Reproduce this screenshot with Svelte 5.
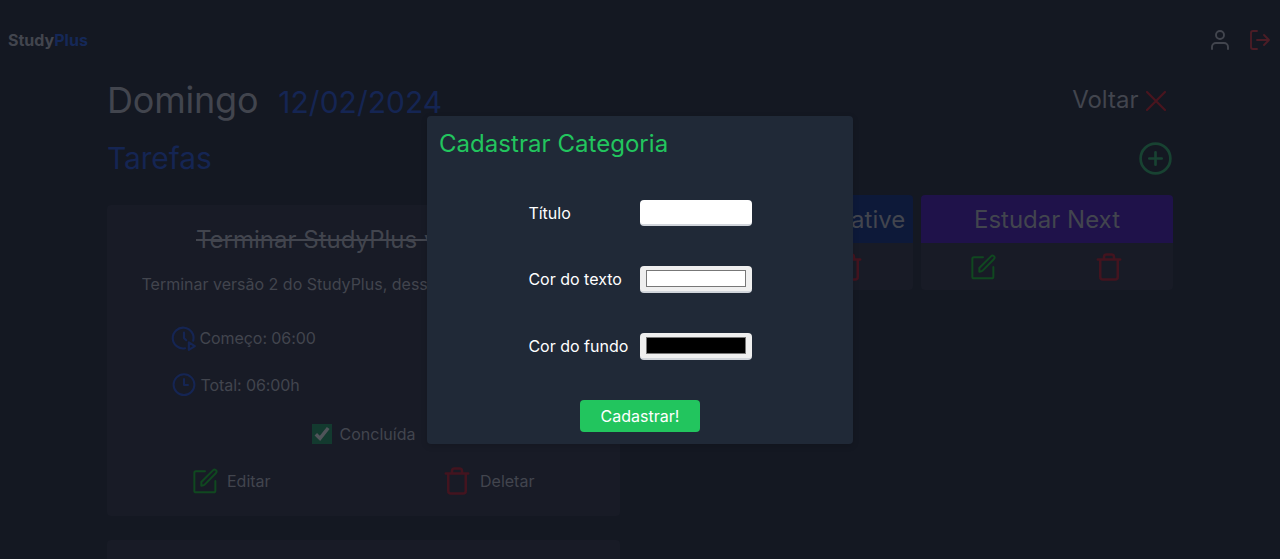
<script>
  const categories = [
    { name: 'Estudar React Native', tone: 'navy' },
    { name: 'Estudar Next', tone: 'purple' }
  ];
  let title = $state('');
  let textColor = $state('#ffffff');
  let backColor = $state('#000000');
</script>

{#snippet edit()}
  <svg class="edit" width="25" height="26" viewBox="0 0 75 78">
    <path d="M36 10H9q-5 0-5 5v53q0 5 5 5h53q5 0 5-5V39" />
    <path d="M25 53V42L60 7q4-4 8-1 5 4 1 9L35 50q-3 3-10 3z" />
  </svg>
{/snippet}

{#snippet trash()}
  <svg class="trash" width="30" height="30" viewBox="0 0 24 24">
    <path d="M3 6h18M19 6v14a2 2 0 0 1-2 2H7a2 2 0 0 1-2-2V6m3 0V4a2 2 0 0 1 2-2h4a2 2 0 0 1 2 2v2" />
  </svg>
{/snippet}

<div class="page">
  <header>
    <div class="logo">Study<span>Plus</span></div>
    <nav>
      <svg class="user" width="24" height="24" viewBox="0 0 24 24"><path d="M20 21v-2a4 4 0 0 0-4-4H8a4 4 0 0 0-4 4v2" /><circle cx="12" cy="7" r="4" /></svg>
      <svg class="exit" width="24" height="24" viewBox="0 0 24 24"><path d="M9 21H5a2 2 0 0 1-2-2V5a2 2 0 0 1 2-2h4M16 17l5-5-5-5M21 12H9" /></svg>
    </nav>
  </header>

  <main>
    <div class="day">
      <h1>Domingo</h1>
      <span class="date">12/02/2024</span>
      <div class="back">
        Voltar
        <svg width="22" height="22" viewBox="0 0 22 22"><path d="M2 2l18 18M20 2L2 20" /></svg>
      </div>
    </div>

    <div class="section">
      <h2>Tarefas</h2>
      <svg width="34" height="34" viewBox="0 0 34 34"><circle cx="16.5" cy="17.5" r="14.9" /><path d="M16.5 11.3v12.4M10.3 17.5h12.4" /></svg>
    </div>

    <div class="content">
      <div class="tasks">
        <article class="task">
          <h3>Terminar StudyPlus versão 2</h3>
          <p>Terminar versão 2 do StudyPlus, dessa vez</p>
          <div class="time">
            <svg width="26" height="26" viewBox="0 0 24 24"><path d="M12 7v5l2 2M20.5 14.5a9.6 9.6 0 1 0-7.5 7M16.5 16v7l5.5-3.5z" /></svg>
            <span>Começo: 06:00</span>
          </div>
          <div class="time total">
            <svg width="26" height="26" viewBox="0 0 26 26"><circle cx="13" cy="12.7" r="10.4" /><path d="M13 7v6h4" /></svg>
            <span>Total: 06:00h</span>
          </div>
          <div class="done">
            <span class="check"><svg width="20" height="20" viewBox="0 0 20 20"><path d="M3.8 10.2l4.2 4.2L16.2 4" /></svg></span>
            <span>Concluída</span>
          </div>
          <div class="actions">
            <div class="action first">{@render edit()}<span>Editar</span></div>
            <div class="action">{@render trash()}<span>Deletar</span></div>
          </div>
        </article>
        <article class="task"></article>
      </div>

      <div class="categories">
        {#each categories as category}
          <article class="category">
            <h3 class={category.tone}>{category.name}</h3>
            <div class="tools">{@render edit()}{@render trash()}</div>
          </article>
        {/each}
      </div>
    </div>
  </main>

  <div class="overlay">
    <form class="modal" onsubmit={(e) => e.preventDefault()}>
      <h2>Cadastrar Categoria</h2>
      <div class="fields">
        <label><span>Título</span><input class="text" type="text" bind:value={title} /></label>
        <label><span class="raised">Cor do texto</span><span class="picker"><i style:background={textColor}></i></span></label>
        <label><span class="raised">Cor do fundo</span><span class="picker"><i style:background={backColor}></i></span></label>
      </div>
      <button>Cadastrar!</button>
    </form>
  </div>
</div>

<style>
  :global(body) { margin: 0; background: #141822; overflow: hidden; }
  * { box-sizing: border-box; }
  .page {
    height: 559px;
    overflow: hidden;
    position: relative;
    background: #141822;
    color: #42454e;
    font: 16px/24px Inter, sans-serif;
  }
  h1, h2, h3, p { margin: 0; font-weight: 400; }
  svg { display: block; flex: none; fill: none; stroke: currentColor; stroke-width: 2; stroke-linecap: round; stroke-linejoin: round; }

  header { height: 80px; padding: 0 8px; display: flex; align-items: center; justify-content: space-between; }
  .logo { font-weight: 700; }
  .logo span { color: #152858; }
  nav { display: flex; gap: 16px; }
  .user, .exit { stroke-width: 1.9; }
  .exit { color: #4b1d26; }

  main { width: 1066px; margin: 0 auto; }
  .day { height: 40px; display: flex; align-items: baseline; }
  .day h1 { font-size: 36px; line-height: 40px; letter-spacing: -0.2px; }
  .date { margin-left: 20px; font-size: 30px; line-height: 36px; color: #152553; }
  .back { margin-left: auto; display: flex; align-items: center; align-self: center; gap: 6px; padding-right: 6.5px; font-size: 24px; line-height: 32px; }
  .back svg { color: #49151f; margin-top: 1px; stroke-width: 2.2; }
  .section { height: 36px; margin-top: 20px; display: flex; align-items: center; justify-content: space-between; }
  .section h2 { font-size: 30px; line-height: 36px; letter-spacing: -0.15px; color: #152553; }
  .section svg { color: #184232; stroke-width: 2.7; }

  .content { display: flex; justify-content: space-between; margin-top: 19px; }
  .tasks { width: 513px; padding-top: 10px; display: flex; flex-direction: column; gap: 24px; }
  .task { height: 311px; flex: none; border-radius: 4px; background: #181b26; padding: 19px 0 0; }
  .task h3 { padding-left: 89px; font-size: 24px; line-height: 32px; text-decoration: line-through; white-space: nowrap; overflow: hidden; }
  .task p { margin: 16px 0 0 34.5px; white-space: nowrap; overflow: hidden; }
  .time { display: flex; align-items: center; gap: 3px; height: 26px; margin: 29px 0 0 63.5px; }
  .time span { letter-spacing: -0.08px; }
  .time svg { color: #152553; }
  .total { margin-top: 21px; }
  .total span { margin-left: 1px; }
  .done { display: flex; justify-content: center; align-items: center; gap: 8px; height: 24px; margin-top: 24px; }
  .check { width: 20px; height: 20px; background: #133a2f; color: #50545a; }
  .check svg { stroke-width: 3.5; stroke-linecap: butt; stroke-linejoin: miter; }
  .actions { display: flex; margin-top: 20px; padding-left: 86px; }
  .action { display: flex; align-items: center; height: 30px; gap: 8px; }
  .first { width: 249px; gap: 9px; }
  .edit { color: #104820; stroke-width: 6; }
  .trash { color: #43141f; }

  .categories { display: flex; gap: 8px; }
  .category { width: 252px; height: 95px; border-radius: 4px; overflow: hidden; background: #181b26; }
  .category h3 { height: 48px; padding-top: 1px; font-size: 24px; line-height: 48px; text-align: center; white-space: nowrap; }
  .navy { background: #0d1939; }
  .purple { background: #1f124a; }
  .tools { height: 47px; display: flex; align-items: center; justify-content: space-around; padding-left: 1px; }

  .overlay { position: absolute; inset: 0; display: grid; place-items: center; padding-top: 1px; }
  .modal {
    width: 426px;
    height: 328px;
    padding: 12px;
    border-radius: 4px;
    background: #202937;
    color: #fff;
    box-shadow: 0 2px 6px rgb(0 0 0 / 0.15);
    display: flex;
    flex-direction: column;
    align-items: center;
  }
  .modal h2 { align-self: stretch; font-size: 24px; line-height: 32px; letter-spacing: 0.04px; color: #22c55e; }
  .fields { display: grid; gap: 40px; width: 224px; margin-top: 40px; }
  label { display: flex; align-items: center; justify-content: space-between; height: 26.67px; padding-left: 0.4px; }
  .raised { margin-top: -2px; }
  .text, .picker { display: block; width: 112px; height: 26px; border: 0; border-bottom: 2px solid #d1d5db; border-radius: 4px; background: #fff; padding: 0; outline: 0; }
  .picker { height: 27px; padding: 4px 6px; background: #efefef; }
  .picker i { display: block; height: 17px; border: 1px solid #777; }
  button { width: 120px; height: 32px; margin-top: 40px; border: 0; border-radius: 4px; background: #22c55e; color: #fff; font: 16px/24px Inter, sans-serif; padding: 0; }
</style>
